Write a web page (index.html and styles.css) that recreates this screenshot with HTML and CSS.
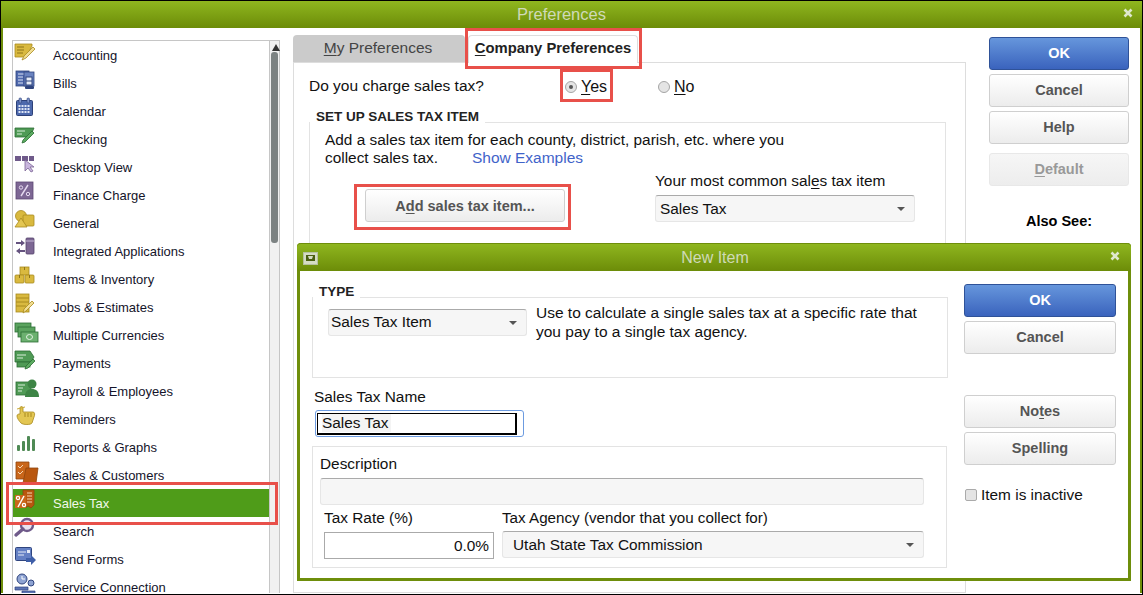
FILE: index.html
```html
<!DOCTYPE html>
<html lang="en">
<head>
<meta charset="utf-8">
<title>Preferences</title>
<link rel="stylesheet" href="styles.css">
</head>
<body>
<div class="win">
  <header class="titlebar main-title">
    <span class="title-text">Preferences</span>
    <svg class="close" width="10" height="10" viewBox="0 0 10 10"><path d="M1.500 1.500l7 7M8.500 1.500l-7 7" stroke="#dfe8cc" stroke-width="2.600"/></svg>
  </header>
  <div class="client">
    <nav class="nav">
      <ul class="list">
        <li class="row"><svg class="ico" width="26" height="24" viewBox="0 0 26 24"><path d="M1 3h12l5 0v2l-6 11H1z" fill="#d9b93f" stroke="#a88a1e" stroke-width=".8"/><path d="M3 6h7M3 9h7M3 12h6" stroke="#8f7518"/><path d="M8 19l2-4 9-9 2 2-9 9z" fill="#f1dd92" stroke="#a88a1e" stroke-width=".8"/></svg><span>Accounting</span></li>
        <li class="row"><svg class="ico" width="26" height="24" viewBox="0 0 26 24"><rect x="2" y="2" width="13" height="15" fill="#4f69ad" stroke="#2f447e" stroke-width=".8"/><path d="M4 5h9M4 8h5M4 11h5M4 14h5" stroke="#dbe3f5"/><rect x="10" y="3" width="10" height="14" fill="#6a83c0" stroke="#2f447e" stroke-width=".8"/><rect x="12" y="8" width="6" height="8" fill="#e5ebf7" stroke="#2f447e"/><path d="M12 12h6" stroke="#2f447e"/><rect x="11" y="17" width="9" height="3" rx="1" fill="#2f447e"/></svg><span>Bills</span></li>
        <li class="row"><svg class="ico" width="26" height="24" viewBox="0 0 26 24"><rect x="2.500" y="3.500" width="16" height="15" rx="1" fill="#4d69ad" stroke="#2d4178"/><rect x="5" y="1" width="2.500" height="5" rx="1" fill="#7d92c7" stroke="#2d4178" stroke-width=".6"/><rect x="13" y="1" width="2.500" height="5" rx="1" fill="#7d92c7" stroke="#2d4178" stroke-width=".6"/><path d="M4.500 9h12M4.500 12h12M4.500 15h12" stroke="#dfe6f6" stroke-width="2" stroke-dasharray="2 1"/></svg><span>Calendar</span></li>
        <li class="row"><svg class="ico" width="26" height="24" viewBox="0 0 26 24"><path d="M1 3h19l-4 9H1z" fill="#4f9a55" stroke="#2c6d34" stroke-width=".8"/><path d="M3 6h8M3 9h5" stroke="#d9eeda"/><path d="M8 18l1-3 9-9 2 2-9 9z" fill="#5cab61" stroke="#2c6d34" stroke-width=".8"/></svg><span>Checking</span></li>
        <li class="row"><svg class="ico" width="26" height="24" viewBox="0 0 26 24"><rect x="1" y="3" width="6" height="5" fill="#6f5a8a"/><rect x="8" y="3" width="6" height="5" fill="#6f5a8a"/><rect x="15" y="3" width="5" height="5" fill="#6f5a8a"/><path d="M11 7l0 11 3-3 3 4 2-1-3-4h4z" fill="#c9b6de" stroke="#7b6695" stroke-width=".8"/></svg><span>Desktop View</span></li>
        <li class="row"><svg class="ico" width="26" height="24" viewBox="0 0 26 24"><rect x="2" y="1" width="17" height="17" fill="#7d6794" stroke="#5c4973" stroke-width=".8"/><circle cx="7" cy="6.500" r="1.700" fill="none" stroke="#e5daf0"/><circle cx="14" cy="13" r="1.700" fill="none" stroke="#e5daf0"/><path d="M14 4L7 15" stroke="#e5daf0" stroke-width="1.400"/></svg><span>Finance Charge</span></li>
        <li class="row"><svg class="ico" width="26" height="24" viewBox="0 0 26 24"><circle cx="7" cy="7" r="5.500" fill="#d9b93f" stroke="#a88a1e" stroke-width=".8"/><rect x="9" y="6" width="11" height="11" rx="1" fill="#d9b93f" stroke="#a88a1e" stroke-width=".8"/><path d="M1 18l6-9 6 9z" fill="#e3c652" stroke="#a88a1e" stroke-width=".8"/></svg><span>General</span></li>
        <li class="row"><svg class="ico" width="26" height="24" viewBox="0 0 26 24"><path d="M2 5h5V3l4 3-4 3V7H2z" fill="#65537f"/><path d="M11 13H6v-2l-4 3 4 3v-2h5z" fill="#65537f"/><rect x="12" y="1" width="8" height="16" rx="1" fill="#7d6794" stroke="#544369" stroke-width=".8"/><path d="M12 4h8" stroke="#c8bad8"/></svg><span>Integrated Applications</span></li>
        <li class="row"><svg class="ico" width="26" height="24" viewBox="0 0 26 24"><rect x="6" y="2" width="9" height="8" fill="#d9b93f" stroke="#a88a1e" stroke-width=".8"/><rect x="1" y="10" width="9" height="8" rx="1" fill="#d9b93f" stroke="#a88a1e" stroke-width=".8"/><rect x="11" y="10" width="9" height="8" rx="1" fill="#d9b93f" stroke="#a88a1e" stroke-width=".8"/><path d="M10.500 2v3M5.500 10v3M15.500 10v3" stroke="#8f7518"/></svg><span>Items &amp; Inventory</span></li>
        <li class="row"><svg class="ico" width="26" height="24" viewBox="0 0 26 24"><rect x="2" y="1" width="13" height="18" fill="#d9b93f" stroke="#a88a1e" stroke-width=".8"/><path d="M2 5h13M2 9h13M2 13h10" stroke="#a88a1e"/><path d="M9 20l1-4 8-8 2 2-8 8z" fill="#f1dd92" stroke="#a88a1e" stroke-width=".8"/></svg><span>Jobs &amp; Estimates</span></li>
        <li class="row"><svg class="ico" width="26" height="24" viewBox="0 0 26 24"><rect x="1" y="2" width="16" height="9" fill="#5ba35f" stroke="#2c6d34" stroke-width=".8"/><rect x="4" y="6" width="17" height="10" fill="#5ba35f" stroke="#2c6d34" stroke-width=".8"/><rect x="7" y="11" width="17" height="10" fill="#6cb170" stroke="#2c6d34" stroke-width=".8"/><ellipse cx="15.500" cy="16" rx="3" ry="2.500" fill="none" stroke="#e3f1e3"/></svg><span>Multiple Currencies</span></li>
        <li class="row"><svg class="ico" width="26" height="24" viewBox="0 0 26 24"><path d="M1 2h15l4 6-3 5H1z" fill="#4f9a55" stroke="#2c6d34" stroke-width=".8"/><path d="M3 6h9M3 9h6" stroke="#d9eeda"/><rect x="3" y="13" width="13" height="5" fill="#4f9a55" stroke="#2c6d34" stroke-width=".8"/><path d="M11 20l1-3 7-7 2 2-7 7z" fill="#5cab61" stroke="#2c6d34" stroke-width=".8"/></svg><span>Payments</span></li>
        <li class="row"><svg class="ico" width="26" height="24" viewBox="0 0 26 24"><rect x="2" y="5" width="15" height="13" fill="#4f9a55" stroke="#2c6d34" stroke-width=".8"/><path d="M4 8h7M4 11h5M4 14h4" stroke="#d9eeda"/><circle cx="18" cy="7" r="4.500" fill="#3d8445"/><path d="M11 20c0-6 3-8 7-8s7 2 7 8z" fill="#3d8445"/></svg><span>Payroll &amp; Employees</span></li>
        <li class="row"><svg class="ico" width="26" height="24" viewBox="0 0 26 24"><path d="M6 9V3c0-2 3-2 3 0v4h10c2 0 2 3 1 5l-2 6c-1 2-9 2-11 0-2-2-4-5-4-7 0-2 2-2 3-2z" fill="#e3c652" stroke="#a88a1e" stroke-width=".8"/><path d="M11 8v4M14 8v4M17 8v4" stroke="#a88a1e"/><path d="M3 4l8-2" stroke="#c9a93a"/></svg><span>Reminders</span></li>
        <li class="row"><svg class="ico" width="26" height="24" viewBox="0 0 26 24"><rect x="3" y="12" width="3" height="6" rx="1" fill="#4f8a55"/><rect x="8" y="8" width="3" height="10" rx="1" fill="#4f8a55"/><rect x="13" y="3" width="3" height="15" rx="1" fill="#4f8a55"/><rect x="18" y="6" width="3" height="12" rx="1" fill="#4f8a55"/></svg><span>Reports &amp; Graphs</span></li>
        <li class="row"><svg class="ico" width="26" height="24" viewBox="0 0 26 24"><path d="M2 1h13v6l-3 11H2z" fill="#c9661a" stroke="#8f450d" stroke-width=".8"/><path d="M4 5l2 2 3-3M4 11l2 2 3-3" stroke="#f6d7b5" fill="none"/><path d="M12 7h12l-2 15H9z" fill="#b9570f" stroke="#8f450d" stroke-width=".8"/></svg><span>Sales &amp; Customers</span></li>
        <li class="row selected"><svg class="ico" width="26" height="24" viewBox="0 0 26 24"><path d="M9 1h11v15l-3 3-3-2-3 2-2-2z" fill="#b9570f" stroke="#8f450d" stroke-width=".8"/><path d="M13 4h5M13 7h5M13 10h5M13 13h5" stroke="#f6d7b5"/><rect x="1" y="6" width="11" height="13" fill="#c9661a"/><circle cx="4" cy="9" r="1.600" fill="none" stroke="#fff" stroke-width="1.300"/><circle cx="10" cy="16" r="1.600" fill="none" stroke="#fff" stroke-width="1.300"/><path d="M10 7L4 18" stroke="#fff" stroke-width="1.500"/></svg><span>Sales Tax</span></li>
        <li class="row"><svg class="ico" width="26" height="24" viewBox="0 0 26 24"><circle cx="13" cy="8" r="6" fill="#e9e3f1" stroke="#6f5a8a" stroke-width="2.400"/><path d="M9 12l-7 6" stroke="#6f5a8a" stroke-width="3.400" stroke-linecap="round"/></svg><span>Search</span></li>
        <li class="row"><svg class="ico" width="26" height="24" viewBox="0 0 26 24"><rect x="1.500" y="2.500" width="16" height="13" rx="1" fill="#6480c4" stroke="#2f447e"/><path d="M4 7h8M4 10h6" stroke="#e5ebf7"/><rect x="13" y="5" width="3" height="3" fill="#e5ebf7"/><path d="M12 13h5v-3l5 5-5 5v-3h-5z" fill="#3f5fa8"/></svg><span>Send Forms</span></li>
        <li class="row"><svg class="ico" width="26" height="24" viewBox="0 0 26 24"><circle cx="8" cy="6" r="5" fill="#8ea3d2" stroke="#2f447e"/><path d="M8 3v3h3" stroke="#fff" fill="none"/><path d="M1 14h13v3H1zM8 18h13v3H8z" fill="#5c74b3" stroke="#2f447e" stroke-width=".7"/><circle cx="17" cy="10" r="3" fill="#8ea3d2" stroke="#2f447e"/></svg><span>Service Connection</span></li>
      </ul>
      <div class="scrollbar"><i class="sb-up"></i><i class="sb-thumb"></i></div>
    </nav>

    <main class="prefs">
      <div class="tabs">
        <div class="tab tab-off"><u>M</u>y Preferences</div>
        <div class="tab tab-on"><u>C</u>ompany Preferences</div>
      </div>
      <section class="panel">
        <div class="question">
          <span class="q-text">Do you charge sales tax?</span>
          <label class="radio r-yes"><i class="dot on"></i><span><u>Y</u>es</span></label>
          <label class="radio r-no"><i class="dot"></i><span><u>N</u>o</span></label>
        </div>
        <fieldset class="group setup">
          <legend>SET UP SALES TAX ITEM</legend>
          <div class="setup-body">
            <p class="setup-text">Add a sales tax item for each county, district, parish, etc. where you<br>collect sales tax.<a class="link">Show Examples</a></p>
            <div class="setup-row">
              <button class="btn add-btn">A<u>d</u>d sales tax item...</button>
              <div class="common">
                <div class="common-label">Your most common sa<span>l</span><u>e</u>s tax item</div>
                <div class="combo common-combo">Sales Tax<i class="caret"></i></div>
              </div>
            </div>
          </div>
        </fieldset>
      </section>
    </main>

    <aside class="actions">
      <button class="btn primary">OK</button>
      <button class="btn">Cancel</button>
      <button class="btn">Help</button>
      <button class="btn disabled"><u>D</u>efault</button>
      <div class="also">Also See:</div>
    </aside>
  </div>

  <div class="modal">
    <header class="titlebar modal-title">
      <svg class="sysicon" width="15" height="13" viewBox="0 0 15 13"><rect x=".5" y=".5" width="14" height="12" fill="#d5dcc4" stroke="#b6c09e"/><rect x="3" y="3" width="9" height="6" fill="#4a5f10"/><path d="M5 4h5l-1 3H6z" fill="#d5dcc4"/></svg>
      <span class="title-text">New Item</span>
      <svg class="close" width="10" height="10" viewBox="0 0 10 10"><path d="M1.500 1.500l7 7M8.500 1.500l-7 7" stroke="#dfe8cc" stroke-width="2.600"/></svg>
    </header>
    <div class="modal-body">
      <div class="modal-left">
        <fieldset class="group type">
          <legend>TYPE</legend>
          <div class="type-body">
            <div class="combo type-combo">Sales Tax Item<i class="caret"></i></div>
            <p class="type-text">Use to calculate a single sales tax at a specific rate that you pay to a single tax agency.</p>
          </div>
        </fieldset>
        <div class="name-label">Sales Tax Name</div>
        <div class="name-input"><div class="name-inner"><span class="name-value">Sales Tax</span></div></div>
        <div class="details">
          <div class="desc-label">Description</div>
          <div class="desc-field"></div>
          <div class="tax-row">
            <div class="rate">
              <div class="rate-label">Tax Rate (%)</div>
              <div class="rate-input">0.0%</div>
            </div>
            <div class="agency">
              <div class="agency-label">Tax Agency (vendor that you collect for)</div>
              <div class="combo agency-combo">Utah State Tax Commission<i class="caret"></i></div>
            </div>
          </div>
        </div>
      </div>
      <div class="modal-right">
        <button class="btn primary">OK</button>
        <button class="btn">Cancel</button>
        <button class="btn gap-top">No<u>t</u>es</button>
        <button class="btn">Spelling</button>
        <label class="check"><i class="box"></i><span>Item is inactive</span></label>
      </div>
    </div>
  </div>

  <div class="mark m-tab"></div>
  <div class="mark m-yes"></div>
  <div class="mark m-add"></div>
  <div class="mark m-nav"></div>
</div>
</body>
</html>
```
FILE: styles.css
```css
* { box-sizing: border-box; }
html, body { margin: 0; padding: 0; }
body { font-family: "Liberation Sans", Arial, sans-serif; font-size: 15.400px; color: #111; background: #fff; }
u { text-underline-offset: 2px; }
.win { position: relative; width: 1143px; height: 595px; overflow: hidden; background: #fff; border: 1px solid #000; }
.titlebar { display: flex; align-items: center; justify-content: center; background: linear-gradient(#8fb61f, #6c8c08); color: #cfdab8; }
.main-title { height: 27px; padding-right: 18px; position: relative; }
.title-text { font-size: 16px; }
.main-title .title-text { font-size: 16.500px; margin-left: -2px; }
.close { position: absolute; right: 9px; top: 7px; }
.client { display: flex; height: 565px; padding-top: 12px; border-left: 2px solid #6e8e0b; border-right: 2px solid #6e8e0b; overflow: hidden; }

.nav { display: flex; width: 268px; margin-left: 9px; border: 1px solid #c6c6c6; border-bottom: 0; flex: none; height: 560px; }
.list { list-style: none; margin: 0; padding: 0; width: 257px; flex: none; border-right: 1px solid #c6c6c6; }
.row { display: flex; align-items: center; height: 28px; position: relative; padding-left: 40px; font-size: 13px; color: #14142a; white-space: nowrap; }
.ico { position: absolute; left: 1px; top: 0; overflow: visible; }
.row.selected { background: #4f9c19; color: #f2f8ea; }
.scrollbar { position: relative; flex: 1; background: #f1f1f1; }
.sb-up { position: absolute; left: 2px; top: 3px; border-left: 4px solid transparent; border-right: 4px solid transparent; border-bottom: 7px solid #333; }
.sb-thumb { position: absolute; left: 1px; top: 11px; width: 7px; height: 191px; border-radius: 3px; background: #7c8282; }

.prefs { width: 673px; margin: -5px 0 0 13px; flex: none; display: flex; flex-direction: column; }
.tabs { display: flex; height: 27px; gap: 3px; }
.tab { width: 172px; display: flex; align-items: center; justify-content: center; border-radius: 4px 4px 0 0; }
.tab-off { background: #cbcbcb; color: #444; font-size: 15.500px; padding: 0 2px 2px 0; }
.tab-on { background: #fff; width: 170px; height: 28px; border: 1px solid #ddd; border-bottom: 0; padding-bottom: 3px; font-weight: bold; font-size: 14.800px; color: #222; position: relative; }
.panel { flex: 1; border: 1px solid #ddd; padding: 0 0 0 15px; }
.question { display: flex; align-items: center; height: 22px; margin-top: 13px; }
.q-text { width: 256px; margin-top: -3px; font-size: 15.500px; }
.radio { display: flex; align-items: center; gap: 4px; font-size: 16px; }
.r-yes { width: 93px; }
.dot { width: 12px; height: 12px; border-radius: 50%; border: 1px solid #a5a5a5; background: #e4e4e4; position: relative; display: block; }
.dot.on::after { content: ""; position: absolute; left: 3px; top: 3px; width: 4px; height: 4px; border-radius: 50%; background: #555; }

.group { border: 1px solid #e3e3e3; margin: 0; padding: 0; min-width: 0; }
legend { position: relative; top: -5px; font-weight: bold; font-size: 13.500px; color: #222; padding: 0 6px; margin-left: 0; line-height: 12px; }
.setup { margin-top: 18px; width: 637px; height: 400px; }
.setup-body { padding: 3px 0 0 15px; }
.setup-text { margin: 0; line-height: 18px; width: 480px; }
.link { color: #3f63c9; margin-left: 34px; font-size: 15.500px; }
.setup-row { display: flex; margin-top: 5px; align-items: flex-start; }
.btn { display: block; border: 1px solid #cfcfcf; border-radius: 3px; background: linear-gradient(#fff, #ececec); font-family: inherit; font-size: 14.500px; font-weight: bold; color: #555; padding: 0 0 2px; height: 33px; width: 100%; }
.add-btn { width: 200px; margin: 17px 0 0 40px; padding: 0; flex: none; }
.common { margin-left: 90px; }
.common-label { line-height: 18px; white-space: nowrap; }
.combo { position: relative; display: flex; align-items: center; background: #f6f6f6; border: 1px solid #e6e6e6; border-top-color: #aaa; border-radius: 3px; padding-left: 4px; height: 27px; }
.caret { position: absolute; right: 9px; top: 11px; border-left: 4px solid transparent; border-right: 4px solid transparent; border-top: 4px solid #555; }
.common-combo { width: 260px; margin-top: 5px; }

.actions { width: 140px; margin: -3px 0 0 23px; display: flex; flex-direction: column; gap: 4px; flex: none; }
.btn.primary { background: linear-gradient(#6696dc, #3a63bd); border-color: #2f5298; color: #fff; }
.btn.disabled { margin-top: 5px; color: #999; background: linear-gradient(#f6f6f6, #ededed); border-color: #e8e8e8; }
.also { font-weight: bold; font-size: 14.500px; color: #000; text-align: center; margin-top: 23px; }

.modal { position: absolute; left: 296px; top: 242px; width: 834px; height: 338px; background: #fff; border: 3px solid #6e8e0b; border-top: 0; border-radius: 4px 4px 0 0; }
.modal-title { height: 28px; margin: 0 -3px; position: relative; border-radius: 4px 4px 0 0; border-top: 1px solid #6e8e0b; }
.modal-title .title-text { margin-left: 2px; }
.modal-title .close { right: 11px; top: 7px; }
.sysicon { position: absolute; left: 6px; top: 8px; }
.modal-body { display: flex; }
.modal-left { width: 664px; flex: none; padding-left: 12px; }
.type { margin-top: 20px; width: 636px; height: 87px; }
.type-body { display: flex; gap: 9px; padding: 6px 0 0 15px; align-items: flex-start; }
.type-combo { width: 199px; flex: none; padding: 0 0 1px 2px; }
.type-text { margin: -6px 0 0; line-height: 19px; width: 400px; font-size: 15.500px; }
.name-label { margin: 10px 0 0 2px; line-height: 18px; }
.name-input { width: 209px; height: 27px; margin: 4px 0 0 3px; border: 1px solid #6c9be0; border-radius: 3px; padding: 2px 6px 2px 1px; }
.name-inner { height: 22px; border: 2px solid #000; border-width: 1px 2px 2px 1px; padding-left: 4px; line-height: 18px; }
.name-value { display: inline-block; padding-right: 3px; background: #f4f4f4; }
.details { width: 635px; height: 122px; margin-top: 9px; border: 1px solid #e3e3e3; padding: 8px 0 0 7px; }
.desc-label { line-height: 18px; }
.desc-field { width: 604px; height: 27px; margin-top: 5px; background: #f6f6f6; border: 1px solid #e6e6e6; border-top-color: #aaa; border-radius: 3px; }
.tax-row { display: flex; margin-top: 4px; padding-left: 4px; }
.rate { width: 178px; flex: none; }
.rate-label, .agency-label { line-height: 18px; white-space: nowrap; }
.agency-label { font-size: 15.200px; }
.rate-input { width: 170px; height: 27px; margin-top: 5px; border: 1px solid #aaa; text-align: right; line-height: 25px; padding-right: 4px; }
.agency-combo { width: 422px; margin-top: 4px; padding: 1px 0 0 10px; }
.modal-right { width: 152px; flex: none; display: flex; flex-direction: column; gap: 4px; padding-top: 13px; }
.gap-top { margin-top: 37px; }
.check { display: flex; align-items: center; gap: 4px; margin-top: 17px; padding-left: 1px; }
.box { width: 12px; height: 12px; display: block; background: #e4e4e4; border: 1px solid #aaa; border-radius: 2px; }

.mark { position: absolute; border: 3px solid #e8504a; pointer-events: none; }
.m-tab { left: 464px; top: 27px; width: 177px; height: 41px; }
.m-yes { left: 559px; top: 68px; width: 53px; height: 33px; }
.m-add { left: 353px; top: 183px; width: 217px; height: 46px; }
.m-nav { left: 5px; top: 481px; width: 272px; height: 43px; }
```
